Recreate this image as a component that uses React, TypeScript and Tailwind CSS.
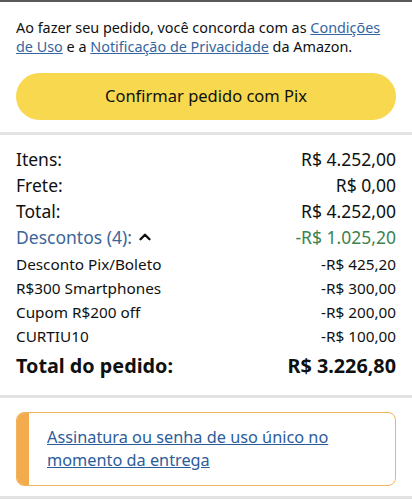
import { ChevronUp } from 'lucide-react';

const totals = [
  { label: 'Itens:', value: 'R$ 4.252,00' },
  { label: 'Frete:', value: 'R$ 0,00' },
  { label: 'Total:', value: 'R$ 4.252,00' },
];

const discounts = [
  { label: 'Desconto Pix/Boleto', value: '-R$ 425,20' },
  { label: 'R$300 Smartphones', value: '-R$ 300,00' },
  { label: 'Cupom R$200 off', value: '-R$ 200,00' },
  { label: 'CURTIU10', value: '-R$ 100,00' },
];

function App() {
  return (
    <div className="min-h-screen bg-white text-[#0f1111] font-['Noto_Sans',sans-serif]">
      <div className="h-[2px] bg-[#5a5a5a]" />

      <section className="px-4 pt-[16px] pb-[12px]">
        <p className="text-[14.4px] leading-[19px]">
          <span className="block">
            Ao fazer seu pedido, você concorda com as{' '}
            <a className="text-[#3566a0] underline">Condições</a>
          </span>
          <span className="block">
            <a className="text-[#3566a0] underline">de Uso</a> e a{' '}
            <a className="text-[#3566a0] underline">Notificação de Privacidade</a> da Amazon.
          </span>
        </p>
        <button className="mt-[17px] w-full h-[47px] rounded-full bg-[#f8d84f] text-[16.5px] text-[#0f1111]">
          Confirmar pedido com Pix
        </button>
      </section>

      <div className="h-[3px] bg-[#e3e3e3]" />

      <section className="px-4 pt-[11px] pb-[14px]">
        {totals.map((row) => (
          <div key={row.label} className="flex justify-between h-[26px] items-center text-[17.5px]">
            <span>{row.label}</span>
            <span>{row.value}</span>
          </div>
        ))}
        <div className="flex justify-between h-[26px] items-center text-[17.5px]">
          <span className="flex items-center gap-[4px] text-[#3d6597]">
            Descontos (4):
            <ChevronUp className="w-[18px] h-[18px] text-[#0f1111]" strokeWidth={3.2} />
          </span>
          <span className="text-[#3e8250]">-R$ 1.025,20</span>
        </div>
        <div className="mt-[2px]">
          {discounts.map((row) => (
            <div key={row.label} className="flex justify-between h-[24px] items-center text-[15.3px]">
              <span>{row.label}</span>
              <span>{row.value}</span>
            </div>
          ))}
        </div>
        <div className="mt-[3px] flex justify-between h-[30px] items-center text-[19.8px] font-bold">
          <span>Total do pedido:</span>
          <span>R$ 3.226,80</span>
        </div>
      </section>

      <div className="h-[3px] bg-[#e3e3e3]" />

      <section className="px-4 pt-[14px] pb-[10px]">
        <div className="flex rounded-lg border-[1.5px] border-[#efb45d] overflow-hidden">
          <div className="w-[12px] bg-[#f3ab4e]" />
          <div className="pl-[18px] pr-4 py-[13px] text-[16.3px] leading-[23px] text-[#2c5c9a]">
            <a className="block underline">Assinatura ou senha de uso único no</a>
            <a className="block underline">momento da entrega</a>
          </div>
        </div>
      </section>

      <div className="h-[3px] bg-[#e3e3e3]" />
    </div>
  );
}

export default App;
